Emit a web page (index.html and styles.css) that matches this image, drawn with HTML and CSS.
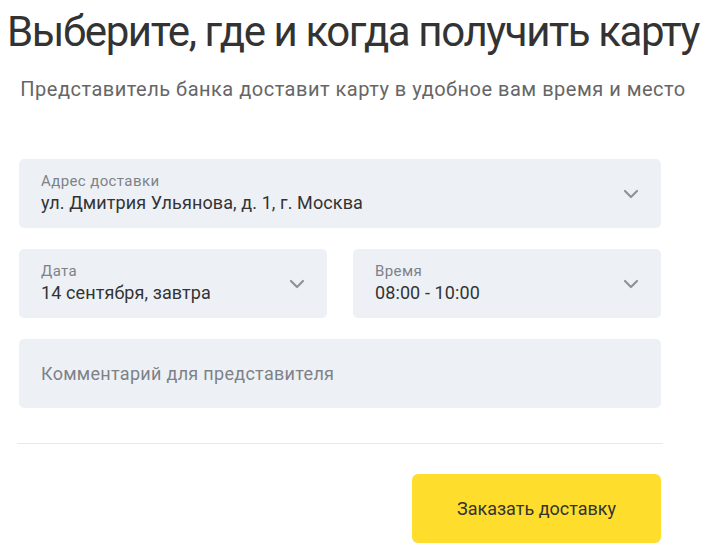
FILE: index.html
```html
<!DOCTYPE html>
<html lang="ru">
<head>
    <meta charset="UTF-8">
    <meta name="viewport" content="width=device-width, initial-scale=1.0">
    <title>Доставка карты</title>
    <link rel="stylesheet" href="styles.css">
</head>
<body>
    <h1 class="title">Выберите, где и когда получить карту</h1>
    <p class="subtitle">Представитель банка доставит карту в удобное вам время и место</p>

    <form class="form">
        <div class="field">
            <div class="field-text">
                <span class="field-label">Адрес доставки</span>
                <span class="field-value">ул. Дмитрия Ульянова, д. 1, г. Москва</span>
            </div>
            <svg class="chevron" width="16" height="10" viewBox="0 0 16 10"><path d="M2 2l6 6 6-6" fill="none" stroke="#8e939a" stroke-width="2.2" stroke-linecap="round" stroke-linejoin="round"/></svg>
        </div>

        <div class="row">
            <div class="field">
                <div class="field-text">
                    <span class="field-label">Дата</span>
                    <span class="field-value">14 сентября, завтра</span>
                </div>
                <svg class="chevron" width="16" height="10" viewBox="0 0 16 10"><path d="M2 2l6 6 6-6" fill="none" stroke="#8e939a" stroke-width="2.2" stroke-linecap="round" stroke-linejoin="round"/></svg>
            </div>
            <div class="field">
                <div class="field-text">
                    <span class="field-label">Время</span>
                    <span class="field-value">08:00 - 10:00</span>
                </div>
                <svg class="chevron" width="16" height="10" viewBox="0 0 16 10"><path d="M2 2l6 6 6-6" fill="none" stroke="#8e939a" stroke-width="2.2" stroke-linecap="round" stroke-linejoin="round"/></svg>
            </div>
        </div>

        <div class="field">
            <span class="field-placeholder">Комментарий для представителя</span>
        </div>

        <hr class="divider">

        <div class="actions">
            <button type="button" class="submit">Заказать доставку</button>
        </div>
    </form>
</body>
</html>
```

FILE: styles.css
```css
body {
    margin: 0;
    font-family: Roboto, "Noto Sans", sans-serif;
    color: #333;
    background: #fff;
}

.title {
    margin: 8px 0 0;
    text-align: center;
    font-size: 42px;
    font-weight: 400;
    line-height: 48px;
    letter-spacing: -1.4px;
    color: #333;
}

.subtitle {
    margin: 21px 0 0;
    text-align: center;
    font-size: 20px;
    line-height: 24px;
    letter-spacing: 0.5px;
    color: #666;
}

.form {
    width: 642px;
    margin: 58px 0 0 19px;
    display: flex;
    flex-direction: column;
    gap: 21px;
}

.row {
    display: flex;
    gap: 26px;
}

.row .field {
    flex: 1;
}

.field {
    height: 69px;
    box-sizing: border-box;
    padding: 0 22px;
    background: #edf1f6;
    border-radius: 5px;
    display: flex;
    align-items: center;
    justify-content: space-between;
}

.field-text {
    display: flex;
    flex-direction: column;
}

.field-label {
    font-size: 15px;
    line-height: 18px;
    letter-spacing: 0.4px;
    color: #7d8288;
}

.field-value {
    font-size: 18px;
    line-height: 26px;
    letter-spacing: 0.1px;
    color: #333;
}

.field-placeholder {
    font-size: 18px;
    letter-spacing: 0.3px;
    color: #7d8288;
}

.divider {
    margin: 14px -2px 0;
    border: none;
    border-top: 1px solid #e6e8eb;
}

.actions {
    display: flex;
    justify-content: flex-end;
    margin-top: 9px;
}

.submit {
    width: 249px;
    height: 69px;
    border: none;
    border-radius: 6px;
    background: #fedd2c;
    color: #333;
    font-family: Roboto, "Noto Sans", sans-serif;
    font-size: 18px;
    cursor: pointer;
}
```
